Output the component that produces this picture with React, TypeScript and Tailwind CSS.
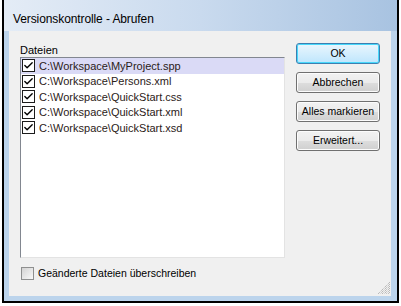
import { Check } from 'lucide-react';

const files = [
  'C:\\Workspace\\MyProject.spp',
  'C:\\Workspace\\Persons.xml',
  'C:\\Workspace\\QuickStart.css',
  'C:\\Workspace\\QuickStart.xml',
  'C:\\Workspace\\QuickStart.xsd',
];

const buttons = ['Abbrechen', 'Alles markieren', 'Erweitert...'];

export default function App() {
  return (
    <div className="w-[401px] h-[306px] bg-white overflow-hidden" style={{ fontFamily: '"Liberation Sans", Arial, sans-serif' }}>
      <div className="ml-[2px] w-[397px] h-[303px] flex flex-col border-l-2 border-r-2 border-b-2 border-black bg-[#bcd4ec]">
        {/* title bar */}
        <div className="h-[31px] shrink-0 flex items-center pl-[9px] pt-[6px] bg-gradient-to-r from-[#e4ecf6] via-[#c9daee] to-[#a8c3e1]">
          <span className="text-[12px] text-black tracking-[-0.1px]">Versionskontrolle - Abrufen</span>
        </div>

        {/* client area */}
        <div className="flex-1 pl-[5px] pr-[6px] pb-[5px]">
          <div className="relative w-[382px] h-[265px] bg-[#f0f0f0] text-[11px] text-black">
            <div className="flex pl-[11px] pt-[12px]">
              {/* left: file list */}
              <div className="w-[265px]">
                <div className="h-[14px] leading-[14px]">Dateien</div>
                <div className="h-[201px] bg-white border-t border-l border-[#828790] border-r border-b border-r-[#e3e3e3] border-b-[#e3e3e3]">
                  {files.map((f, i) => (
                    <div
                      key={f}
                      className={`flex items-center h-[15.5px] pl-[1px] ${i === 0 ? 'bg-[#dadaf6]' : ''}`}
                    >
                      <div className="w-[13px] h-[13px] border border-[#1c1c1c] bg-white flex items-center justify-center">
                        <Check className="w-[11px] h-[11px] text-black" strokeWidth={3} />
                      </div>
                      <span className="ml-[4px] text-[11px] text-[#2b2118]">{f}</span>
                    </div>
                  ))}
                </div>
              </div>

              {/* right: buttons */}
              <div className="ml-[11px] flex flex-col gap-[8px]">
                <button className="w-[84px] h-[21px] rounded-[3px] border border-[#3c7fb1] shadow-[inset_0_0_0_1px_#48d8fb] bg-gradient-to-b from-[#eaf6fd] to-[#bee6fd] text-[10.5px] text-black">
                  OK
                </button>
                {buttons.map((b) => (
                  <button
                    key={b}
                    className="w-[84px] h-[21px] rounded-[3px] border border-[#707070] shadow-[inset_0_0_0_1px_#fcfcfc] bg-[linear-gradient(to_bottom,#f2f2f2_0%,#ebebeb_50%,#dddddd_51%,#cfcfcf_100%)] text-[10.5px] text-black"
                  >
                    {b}
                  </button>
                ))}
              </div>
            </div>

            {/* bottom checkbox */}
            <div className="flex items-center pl-[12px] mt-[8px]">
              <div className="w-[13px] h-[13px] border border-[#8e8f8f] bg-gradient-to-br from-[#d3d3d3] to-[#f9f9f9]" />
              <span className="ml-[4px] text-[10.5px]">Geänderte Dateien überschreiben</span>
            </div>

            {/* size grip */}
            <svg className="absolute right-[1px] bottom-[2px]" width="12" height="12" viewBox="0 0 12 12">
              {[0, 1, 2, 3, 4, 5].map((k) => (
                <g key={k}>
                  <line x1={12} y1={k * 2} x2={k * 2} y2={12} stroke="#a0a0a0" strokeWidth="1" strokeDasharray="1 1" />
                </g>
              ))}
            </svg>
          </div>
        </div>
      </div>
    </div>
  );
}
